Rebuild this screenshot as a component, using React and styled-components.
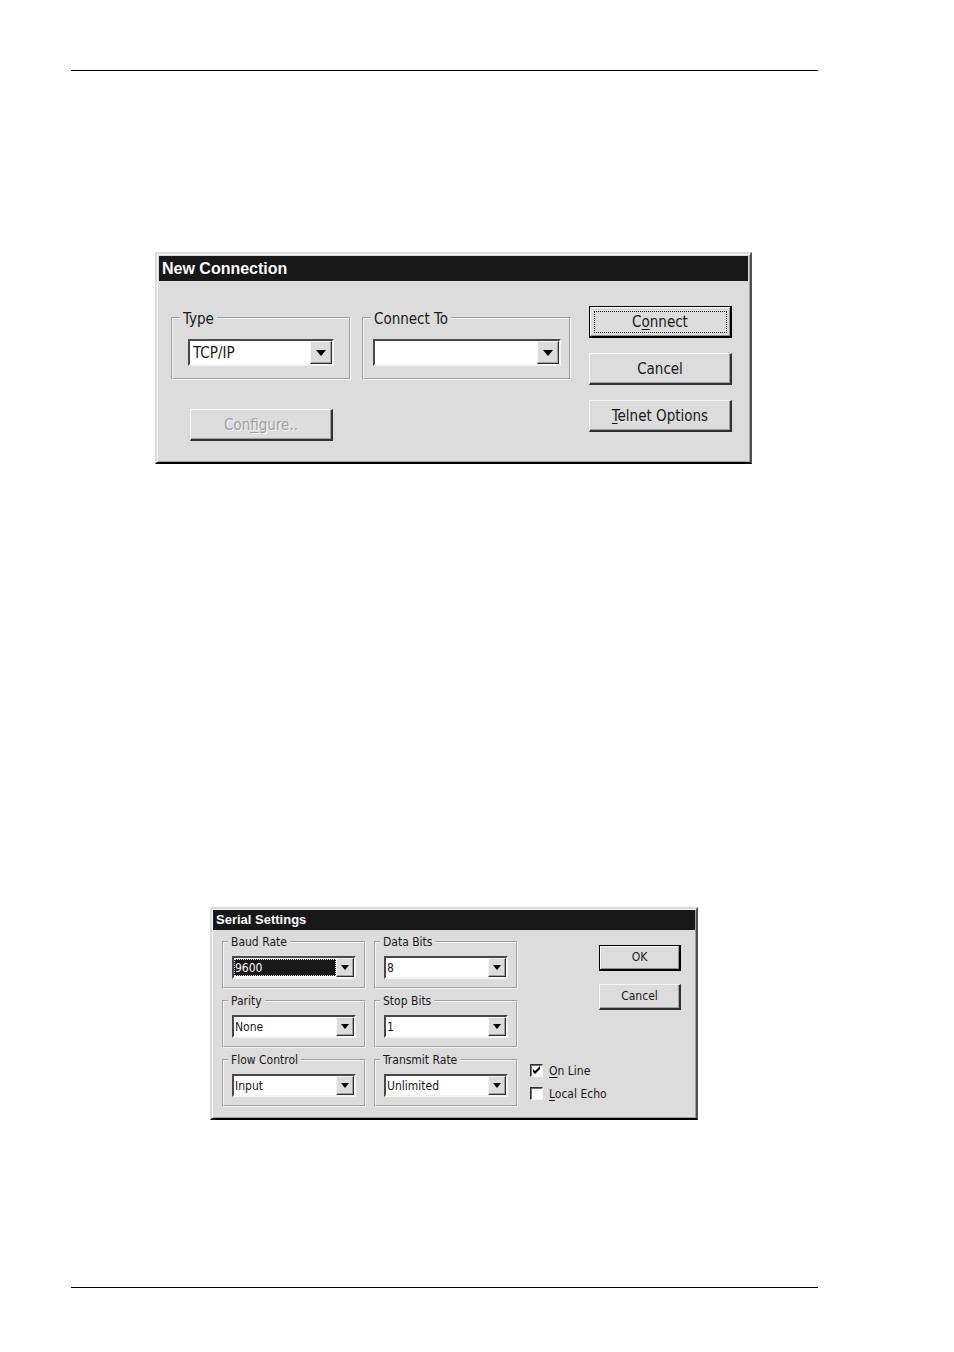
import React, { useRef, useState } from "react";
import styled, { createGlobalStyle } from "styled-components";

const GlobalStyle = createGlobalStyle`
  * {
    box-sizing: border-box;
  }
  body {
    margin: 0;
    background: #fff;
    color: #181818;
    font-family: "DejaVu Sans Condensed", "DejaVu Sans", sans-serif;
    font-stretch: condensed;
  }
`;

const Page = styled.main`
  padding: 70px 136px 64px 71px;
`;

const Sheet = styled.div`
  display: flex;
  flex-direction: column;
  gap: 443px;
  padding: 181px 66px 167px 84px;
  border: solid #000;
  border-width: 1px 0;
`;

const Dialog = styled.section`
  margin: ${(props) => (props.$small ? "0 54px 0 55px" : "0")};
  padding: ${(props) => (props.$small ? "1px" : "2px")};
  background: #dcdcdc;
  border: 2px solid;
  border-color: #dcdcdc #505050 #000 #dcdcdc;
  box-shadow: inset 1px 1px #f8f8f8, inset -1px -1px #a0a0a0;
  font-size: ${(props) => (props.$small ? "12px" : "15px")};
  line-height: ${(props) => (props.$small ? "16px" : "20px")};
`;

const TitleBar = styled.h2`
  margin: 0;
  padding: 0 3px;
  background: #181818;
  color: #fff;
  font-family: "Liberation Sans", Arial, sans-serif;
  font-weight: bold;
  font-size: ${(props) => (props.$small ? "13px" : "16px")};
  line-height: ${(props) => (props.$small ? "20px" : "25px")};
`;

const ConnectionForm = styled.form`
  display: flex;
  gap: 18px;
  padding: 25px 16px 19px 12px;
`;

const ConnectionFields = styled.div`
  flex: 1;
  display: flex;
  flex-direction: column;
  justify-content: space-between;
  align-items: flex-start;
  padding: 1px 0 0;
`;

const GroupRow = styled.div`
  display: grid;
  grid-template-columns: 180fr 209fr;
  gap: 11px;
  width: 100%;
`;

const ConfigureRow = styled.div`
  padding: 29px 0 0 19px;
`;

const ButtonColumn = styled.div`
  display: flex;
  flex-direction: column;
  gap: 15px;
`;

const SerialForm = styled.form`
  display: flex;
  gap: 12px;
  padding: 4px 14px 10px 9px;
`;

const SerialGrid = styled.div`
  flex: 1;
  display: grid;
  grid-template-columns: 1fr 1fr;
  gap: 4px 8px;
`;

const SerialSide = styled.div`
  width: 151px;
  display: flex;
  flex-direction: column;
  justify-content: space-between;
  padding: 11px 0 5px;
`;

const SerialButtons = styled.div`
  display: flex;
  flex-direction: column;
  align-items: flex-end;
  gap: 13px;
`;

const Group = styled.fieldset`
  min-width: 0;
  margin: 0;
  padding: ${(props) => (props.$small ? "6px 8px 8px" : props.$wide ? "10px 8px 12px 9px" : "10px 15px 12px")};
  border: 2px groove #f4f4f4;
`;

const Legend = styled.legend`
  margin: 0 0 0 ${(props) => (props.$small ? "-4px" : props.$shift)};
  padding: ${(props) => (props.$small ? "0 3px" : "2px 3px 0")};
`;

const ComboFrame = styled.div`
  display: flex;
  height: ${(props) => (props.$small ? "23px" : "27px")};
  background: #fff;
  border: 2px solid;
  border-color: #484848 #f4f4f4 #f4f4f4 #484848;
`;

const ComboSelect = styled.select`
  flex: 1;
  min-width: 0;
  margin: ${(props) => (props.$selected ? "1px 0" : "0")};
  padding: 0 0 0 ${(props) => (props.$selected ? "0" : props.$small ? "1px" : "3px")};
  appearance: none;
  border: ${(props) => (props.$selected ? "1px dotted #dcdcdc" : "0")};
  outline: none;
  background: ${(props) => (props.$selected ? "#181818" : "#fff")};
  color: ${(props) => (props.$selected ? "#fff" : "#181818")};
  font: inherit;
`;

const ComboButton = styled.button`
  display: flex;
  align-items: center;
  justify-content: center;
  width: ${(props) => (props.$small ? "18px" : "22px")};
  padding: 0;
  background: #dcdcdc;
  border: 1px solid;
  border-color: #f4f4f4 #303030 #303030 #f4f4f4;
  box-shadow: inset -1px -1px #a0a0a0;
`;

const Button = styled.button`
  width: ${(props) => (props.$small ? "82px" : "143px")};
  height: ${(props) => (props.$small ? "26px" : "32px")};
  padding: ${(props) => (props.$small ? "0 0 2px" : "0")};
  background: #dcdcdc;
  color: #181818;
  border: solid;
  border-width: 1px 2px 2px 1px;
  border-color: ${(props) => (props.$primary ? "#000" : "#f8f8f8 #303030 #303030 #f8f8f8")};
  box-shadow: ${(props) =>
    props.$primary ? "inset 1px 1px #f8f8f8, inset -1px -1px #909090" : "inset -1px -1px #a0a0a0"};
  outline: ${(props) => (props.$focused ? "1px dotted #181818" : "none")};
  outline-offset: -6px;
  font: inherit;
  &:disabled {
    color: #a0a0a0;
    text-shadow: 1px 1px #f8f8f8;
  }
`;

const Mnemonic = styled.span`
  text-decoration: underline;
  text-decoration-thickness: 1px;
  text-underline-offset: 2px;
`;

const CheckList = styled.div`
  display: flex;
  flex-direction: column;
  gap: 5px;
`;

const CheckLabel = styled.label`
  display: flex;
  align-items: center;
  gap: 6px;
`;

const CheckText = styled.span`
  padding-top: 2px;
`;

const CheckBox = styled.input.attrs({ type: "checkbox" })`
  appearance: none;
  width: 13px;
  height: 13px;
  margin: 0;
  background: #fff;
  border: 1px solid;
  border-color: #303030 #f4f4f4 #f4f4f4 #303030;
  box-shadow: inset 1px 1px #707070;
  &:checked {
    background: #fff
      url("data:image/svg+xml,%3Csvg xmlns='http://www.w3.org/2000/svg' viewBox='0 0 11 11'%3E%3Cpath d='M2 4v3l2 2 5-5V1L4 6z'/%3E%3C/svg%3E");
  }
`;

const Combo = ({ label, options, small, wide, selected }) => {
  const select = useRef();
  const [value, setValue] = useState(options[0]);
  const id = label.toLowerCase().replace(" ", "-");
  return (
    <Group $small={small} $wide={wide}>
      <Legend $small={small} $shift={wide ? "-2px" : "-8px"}>
        <label htmlFor={id}>{label}</label>
      </Legend>
      <ComboFrame $small={small}>
        <ComboSelect
          id={id}
          ref={select}
          value={value}
          $small={small}
          $selected={selected}
          onChange={(e) => setValue(e.target.value)}
        >
          {options.map((option) => (
            <option key={option}>{option}</option>
          ))}
        </ComboSelect>
        <ComboButton
          type="button"
          tabIndex={-1}
          aria-label={`Open ${label}`}
          $small={small}
          onClick={() => select.current?.showPicker()}
        >
          <svg width={small ? 8 : 10} height={small ? 5 : 6} viewBox="0 0 10 6">
            <path d="M0 0h10L5 6z" fill="#000" />
          </svg>
        </ComboButton>
      </ComboFrame>
    </Group>
  );
};

const NewConnection = () => (
  <Dialog>
    <TitleBar>New Connection</TitleBar>
    <ConnectionForm onSubmit={(e) => e.preventDefault()}>
      <ConnectionFields>
        <GroupRow>
          <Combo label="Type" options={["TCP/IP", "Serial"]} />
          <Combo label="Connect To" options={[""]} wide />
        </GroupRow>
        <ConfigureRow>
          <Button type="button" disabled>
            Con<Mnemonic>f</Mnemonic>igure..
          </Button>
        </ConfigureRow>
      </ConnectionFields>
      <ButtonColumn>
        <Button type="submit" $primary $focused>
          C<Mnemonic>o</Mnemonic>nnect
        </Button>
        <Button type="button">Cancel</Button>
        <Button type="button">
          <Mnemonic>T</Mnemonic>elnet Options
        </Button>
      </ButtonColumn>
    </ConnectionForm>
  </Dialog>
);

const SerialSettings = () => (
  <Dialog $small>
    <TitleBar $small>Serial Settings</TitleBar>
    <SerialForm onSubmit={(e) => e.preventDefault()}>
      <SerialGrid>
        <Combo small selected label="Baud Rate" options={["9600", "19200"]} />
        <Combo small label="Data Bits" options={["8", "7"]} />
        <Combo small label="Parity" options={["None", "Even", "Odd"]} />
        <Combo small label="Stop Bits" options={["1", "2"]} />
        <Combo small label="Flow Control" options={["Input", "Output"]} />
        <Combo small label="Transmit Rate" options={["Unlimited"]} />
      </SerialGrid>
      <SerialSide>
        <SerialButtons>
          <Button type="submit" $small $primary>
            OK
          </Button>
          <Button type="button" $small>
            Cancel
          </Button>
        </SerialButtons>
        <CheckList>
          <CheckLabel>
            <CheckBox defaultChecked />
            <CheckText>
              <Mnemonic>O</Mnemonic>n Line
            </CheckText>
          </CheckLabel>
          <CheckLabel>
            <CheckBox />
            <CheckText>
              <Mnemonic>L</Mnemonic>ocal Echo
            </CheckText>
          </CheckLabel>
        </CheckList>
      </SerialSide>
    </SerialForm>
  </Dialog>
);

const App = () => {
  return (
    <>
      <GlobalStyle />
      <Page>
        <Sheet>
          <NewConnection />
          <SerialSettings />
        </Sheet>
      </Page>
    </>
  );
};

export default App;
